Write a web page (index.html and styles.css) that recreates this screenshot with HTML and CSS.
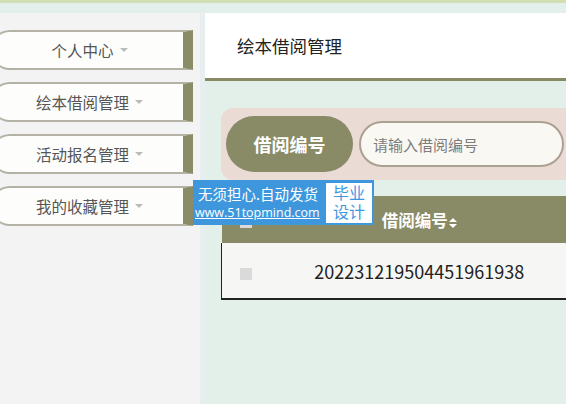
FILE: index.html
```html
<!DOCTYPE html>
<html lang="zh">
<head>
<meta charset="UTF-8">
<title>绘本借阅管理</title>
<link rel="stylesheet" href="styles.css">
</head>
<body>
  <div class="top-band"></div>
  <div class="layout">
    <div class="sidebar">
      <div class="menu-item">个人中心<span class="caret"></span></div>
      <div class="menu-item">绘本借阅管理<span class="caret"></span></div>
      <div class="menu-item">活动报名管理<span class="caret"></span></div>
      <div class="menu-item">我的收藏管理<span class="caret"></span></div>
    </div>
    <div class="main">
      <div class="page-header">绘本借阅管理</div>
      <div class="content">
        <div class="search-panel">
          <div class="search-label">借阅编号</div>
          <input class="search-input" type="text" placeholder="请输入借阅编号">
        </div>
        <table class="data-table">
          <thead>
            <tr>
              <th class="col-check"><span class="checkbox"></span></th>
              <th class="col-no">借阅编号<svg class="sort" width="8" height="10" viewBox="0 0 8 10"><path d="M4 0L8 4H0Z M4 10L8 6H0Z" fill="#fff"/></svg></th>
            </tr>
          </thead>
          <tbody>
            <tr>
              <td class="col-check"><span class="checkbox"></span></td>
              <td class="col-no">202231219504451961938</td>
            </tr>
          </tbody>
        </table>
      </div>
    </div>
  </div>

  <div class="watermark">
    <div class="wm-left">
      <div class="wm-line">无须担心.自动发货</div>
      <div class="wm-url">www.51topmind.com</div>
    </div>
    <div class="wm-right">毕业<br>设计</div>
  </div>
</body>
</html>
```

FILE: styles.css
```css
html, body {
  margin: 0;
  height: 100%;
  overflow: hidden;
}

body {
  font-family: "Noto Sans CJK SC", "Noto Sans", sans-serif;
  background: #f3f3f3;
  position: relative;
}

.top-band {
  height: 10px;
  border-top: 3px solid #d2ddb3;
  background: #e2efea;
}

.layout {
  display: flex;
  height: calc(100% - 13px);
}

.sidebar {
  width: 205px;
  flex-shrink: 0;
  padding-top: 17px;
  display: flex;
  flex-direction: column;
  gap: 12px;
  border-right: 5px solid #e6eef0;
  box-sizing: border-box;
}

.menu-item {
  margin-left: -10px;
  width: 203px;
  height: 40px;
  box-sizing: border-box;
  border: 2px solid #b3b2a5;
  border-right: 10px solid #8a8c68;
  border-radius: 20px 0 0 20px;
  background: #fdfdfb;
  display: flex;
  align-items: center;
  justify-content: center;
  font-size: 15.5px;
  color: #555;
  padding-left: 4px;
}

.caret {
  display: inline-block;
  margin-left: 6px;
  border-left: 4px solid transparent;
  border-right: 4px solid transparent;
  border-top: 4px solid #bbb;
}

.main {
  flex: 1;
  background: #e3f0ea;
  overflow: hidden;
}

.page-header {
  height: 65px;
  background: #fff;
  border-bottom: 3px solid #878a65;
  padding-left: 32px;
  display: flex;
  align-items: center;
  font-size: 17.5px;
  color: #222;
}

.content {
  padding: 27px 0 0 16px;
}

.search-panel {
  display: flex;
  align-items: center;
  width: 400px;
  height: 72px;
  box-sizing: border-box;
  padding: 0 5px;
  background: #ebdbd5;
  border-radius: 12px;
}

.search-label {
  width: 127px;
  height: 56px;
  border-radius: 28px;
  background: #898b67;
  color: #fff;
  font-size: 18px;
  font-weight: bold;
  display: flex;
  align-items: center;
  justify-content: center;
}

.search-input {
  margin-left: 6px;
  width: 205px;
  height: 46px;
  box-sizing: border-box;
  border: 2px solid #aaa192;
  border-radius: 23px;
  background: #faf8f3;
  padding: 0 12px;
  font-family: inherit;
  font-size: 15px;
}

.search-input::placeholder {
  color: #7d7d7d;
}

.data-table {
  margin-top: 16px;
  border-collapse: collapse;
  width: 346px;
}

.data-table th,
.data-table td {
  padding: 0;
}

.data-table th {
  height: 47px;
  background: #898b67;
  color: #fff;
  font-size: 16.5px;
  font-weight: bold;
}

.data-table td {
  height: 55px;
  background: #f6f6f4;
  border-bottom: 2px solid #222;
  font-size: 18px;
  color: #222;
}

.data-table tbody tr td:first-child {
  border-left: 1px solid #222;
}

.col-check {
  width: 50px;
  text-align: left;
  box-sizing: border-box;
}

.data-table .col-check {
  padding-left: 18px;
}

.col-no {
  text-align: center;
}

.checkbox {
  display: inline-block;
  width: 12px;
  height: 12px;
  background: #dadada;
  vertical-align: middle;
}

.sort {
  margin-left: 1px;
  vertical-align: -1px;
}

.watermark {
  position: absolute;
  left: 193px;
  top: 180px;
  width: 181px;
  height: 45px;
  background: #3e97dd;
  display: flex;
  align-items: center;
  padding: 0 2px;
  box-sizing: border-box;
}

.wm-left {
  color: #fff;
  flex: 1;
}

.wm-line {
  font-size: 14.5px;
  line-height: 20px;
  padding-left: 3px;
}

.wm-url {
  font-family: "Open Sans", "Noto Sans", sans-serif;
  font-size: 12.5px;
  line-height: 18px;
  text-decoration: underline;
}

.wm-right {
  width: 46px;
  height: 40px;
  background: #fff;
  color: #3e97dd;
  font-size: 16px;
  line-height: 19px;
  text-align: center;
}
```
